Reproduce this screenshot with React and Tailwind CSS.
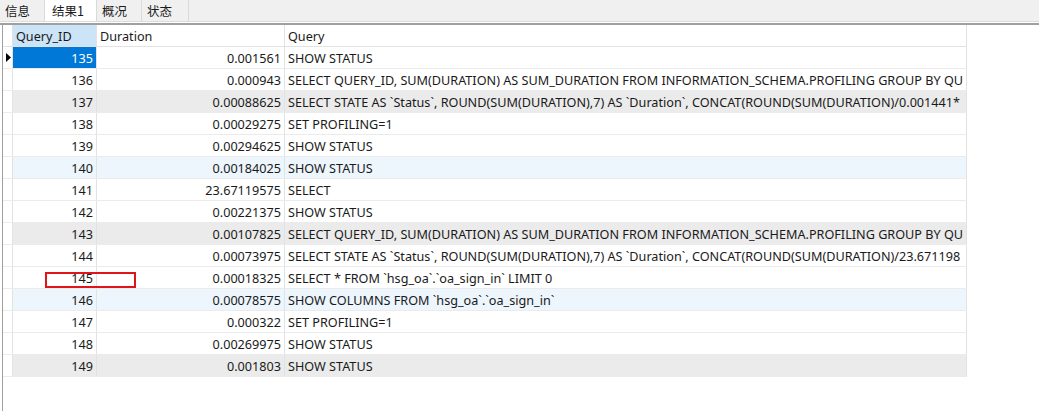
const rows = [
  ["135", "0.001561", "SHOW STATUS"],
  ["136", "0.000943", "SELECT QUERY_ID, SUM(DURATION) AS SUM_DURATION FROM INFORMATION_SCHEMA.PROFILING GROUP BY QU"],
  ["137", "0.00088625", "SELECT STATE AS `Status`, ROUND(SUM(DURATION),7) AS `Duration`, CONCAT(ROUND(SUM(DURATION)/0.001441*"],
  ["138", "0.00029275", "SET PROFILING=1"],
  ["139", "0.00294625", "SHOW STATUS"],
  ["140", "0.00184025", "SHOW STATUS"],
  ["141", "23.67119575", "SELECT"],
  ["142", "0.00221375", "SHOW STATUS"],
  ["143", "0.00107825", "SELECT QUERY_ID, SUM(DURATION) AS SUM_DURATION FROM INFORMATION_SCHEMA.PROFILING GROUP BY QU"],
  ["144", "0.00073975", "SELECT STATE AS `Status`, ROUND(SUM(DURATION),7) AS `Duration`, CONCAT(ROUND(SUM(DURATION)/23.671198"],
  ["145", "0.00018325", "SELECT * FROM `hsg_oa`.`oa_sign_in` LIMIT 0"],
  ["146", "0.00078575", "SHOW COLUMNS FROM `hsg_oa`.`oa_sign_in`"],
  ["147", "0.000322", "SET PROFILING=1"],
  ["148", "0.00269975", "SHOW STATUS"],
  ["149", "0.001803", "SHOW STATUS"],
];

const tabs = ["信息", "结果1", "概况", "状态"];

export default function App() {
  return (
    <div
      className="w-[1039px] h-[411px] bg-white text-[12.65px] text-[#1a1a1a] overflow-hidden flex flex-col"
      style={{ fontFamily: '"Noto Sans", "Noto Sans CJK SC", sans-serif' }}
    >
      {/* Tabs */}
      <div className="h-[22px] bg-[#f0f0f0] flex border-b border-[#dcdcdc]">
        {tabs.map((t, i) => (
          <div
            key={t}
            className={`h-full flex items-center pt-[2px] border-r border-[#dadada] ${
              i === 1 ? "bg-white px-[7px] w-[52px]" : "px-[5px]"
            } ${i === 0 ? "w-[45px]" : ""} ${i === 2 ? "w-[45px]" : ""} ${i === 3 ? "w-[47px]" : ""}`}
          >
            <span style={{ fontFamily: '"Noto Sans CJK SC", sans-serif' }} className="text-[12.5px] leading-none">
              {t}
            </span>
          </div>
        ))}
      </div>
      <div className="h-[1px] bg-white" />
      <div className="h-[2px] bg-[#a0a0a0]" />

      {/* Grid */}
      <div className="flex-1 flex pl-[2px]">
        <div className="relative border-l border-[#a0a0a0] flex flex-col">
          {/* Header */}
          <div className="flex h-[22px] border-b border-[#e2e2e2]">
            <div className="w-[10px] border-r border-[#e2e2e2]" />
            <div className="w-[84px] bg-[#cce4f7] border-r border-[#e2e2e2] flex items-center pt-[1px] pl-[3px]">Query_ID</div>
            <div className="w-[188px] border-r border-[#e2e2e2] flex items-center pt-[1px] pl-[3px]">Duration</div>
            <div className="w-[682px] border-r border-[#e2e2e2] flex items-center pt-[1px] pl-[3px]">Query</div>
          </div>
          {rows.map(([id, dur, q], i) => {
            const bg = i % 6 === 5 ? "bg-[#edf5fd]" : i % 3 === 2 ? "bg-[#ebebeb]" : "bg-white";
            return (
              <div key={id} className="flex h-[22px] border-b border-[#ebebeb]">
                <div className="w-[10px] border-r border-[#e2e2e2] bg-white flex items-center justify-start">
                  {i === 0 && (
                    <svg width="5" height="9" viewBox="0 0 5 9" className="ml-[3px]">
                      <path d="M0 0 L5 4.5 L0 9 Z" fill="#000" />
                    </svg>
                  )}
                </div>
                <div
                  className={`w-[84px] border-r border-[#e2e2e2] flex items-center pt-[1px] justify-end pr-[3px] ${
                    i === 0 ? "bg-[#0078d7] text-white" : bg
                  }`}
                >
                  {id}
                </div>
                <div className={`w-[188px] border-r border-[#e2e2e2] flex items-center pt-[1px] justify-end pr-[3px] ${bg}`}>
                  {dur}
                </div>
                <div className={`w-[682px] border-r border-[#e2e2e2] flex items-center pt-[1px] pl-[3px] overflow-hidden whitespace-nowrap ${bg}`}>
                  {q}
                </div>
              </div>
            );
          })}
          <div className="flex-1" />
          {/* highlight box */}
          <div className="absolute left-[42px] top-[247px] w-[91px] h-[16px] border-2 border-[#e0151c]" />
        </div>
      </div>
    </div>
  );
}
